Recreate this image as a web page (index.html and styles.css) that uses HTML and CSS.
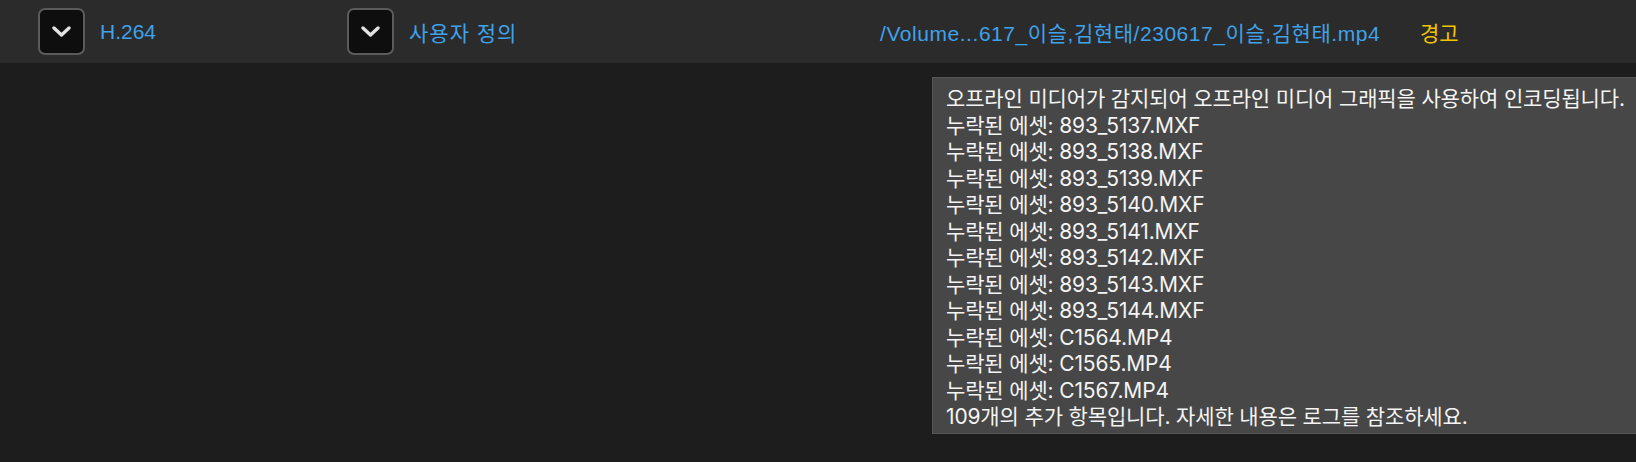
FILE: index.html
```html
<!DOCTYPE html>
<html lang="ko">
<head>
    <meta charset="UTF-8">
    <meta name="viewport" content="width=device-width, initial-scale=1.0">
    <title>대기열</title>
    <link rel="stylesheet" href="styles.css">
</head>
<body>

    <div class="queue-row">
        <div class="cell">
            <button class="drop-btn" type="button">
                <svg width="19" height="11" viewBox="0 0 19 11"><polyline points="2,2 9.5,9 17,2" /></svg>
            </button>
            <span class="link">H.264</span>
        </div>
        <div class="cell">
            <button class="drop-btn" type="button">
                <svg width="19" height="11" viewBox="0 0 19 11"><polyline points="2,2 9.5,9 17,2" /></svg>
            </button>
            <span class="link wide">사용자 정의</span>
        </div>
        <div class="cell">
            <span class="link path">/Volume...617_이슬,김현태/230617_이슬,김현태.mp4</span>
        </div>
        <div class="cell">
            <span class="warn">경고</span>
        </div>
    </div>

    <!-- Tooltip shown over the status column -->
    <div class="tooltip">
        <p>오프라인 미디어가 감지되어 오프라인 미디어 그래픽을 사용하여 인코딩됩니다.</p>
        <p>누락된 에셋: 893_5137.MXF</p>
        <p>누락된 에셋: 893_5138.MXF</p>
        <p>누락된 에셋: 893_5139.MXF</p>
        <p>누락된 에셋: 893_5140.MXF</p>
        <p>누락된 에셋: 893_5141.MXF</p>
        <p>누락된 에셋: 893_5142.MXF</p>
        <p>누락된 에셋: 893_5143.MXF</p>
        <p>누락된 에셋: 893_5144.MXF</p>
        <p>누락된 에셋: C1564.MP4</p>
        <p>누락된 에셋: C1565.MP4</p>
        <p>누락된 에셋: C1567.MP4</p>
        <p>109개의 추가 항목입니다. 자세한 내용은 로그를 참조하세요.</p>
    </div>

</body>
</html>
```

FILE: styles.css
```css
body {
    margin: 0;
    padding: 0;
    background-color: #1d1d1d;
    font-family: "Liberation Sans", "Noto Sans CJK KR", sans-serif;
    overflow: hidden;
    height: 462px;
    position: relative;
}

.queue-row {
    height: 63px;
    background-color: #2b2b2b;
    display: grid;
    grid-template-columns: 309px 533px 540px 1fr;
    align-items: center;
    padding-left: 38px;
    box-sizing: border-box;
}

.cell {
    display: flex;
    align-items: center;
    gap: 15px;
    white-space: nowrap;
}

.drop-btn {
    width: 47px;
    height: 47px;
    box-sizing: border-box;
    background-color: #0e0e0e;
    border: 2px solid #5b5b5b;
    border-radius: 7px;
    padding: 0;
    display: flex;
    align-items: center;
    justify-content: center;
    cursor: pointer;
}

.drop-btn svg polyline {
    fill: none;
    stroke: #e2e2e2;
    stroke-width: 3.4;
    stroke-linecap: round;
    stroke-linejoin: round;
}

.link {
    color: #3fa2ea;
    font-size: 21px;
}

.wide {
    letter-spacing: 1px;
}

.path {
    letter-spacing: 0.55px;
}

.warn {
    color: #f3c300;
    font-size: 21px;
}

.tooltip {
    position: absolute;
    left: 932px;
    top: 77px;
    width: 720px;
    box-sizing: border-box;
    background-color: #474747;
    border: 1px solid #565656;
    padding: 8px 14px 2px 13px;
    color: #f4f4f4;
    font-family: Inter, "Noto Sans CJK KR", sans-serif;
    font-size: 21px;
    letter-spacing: -0.15px;
    line-height: 26.5px;
}

.tooltip p {
    margin: 0;
    white-space: nowrap;
}
```
